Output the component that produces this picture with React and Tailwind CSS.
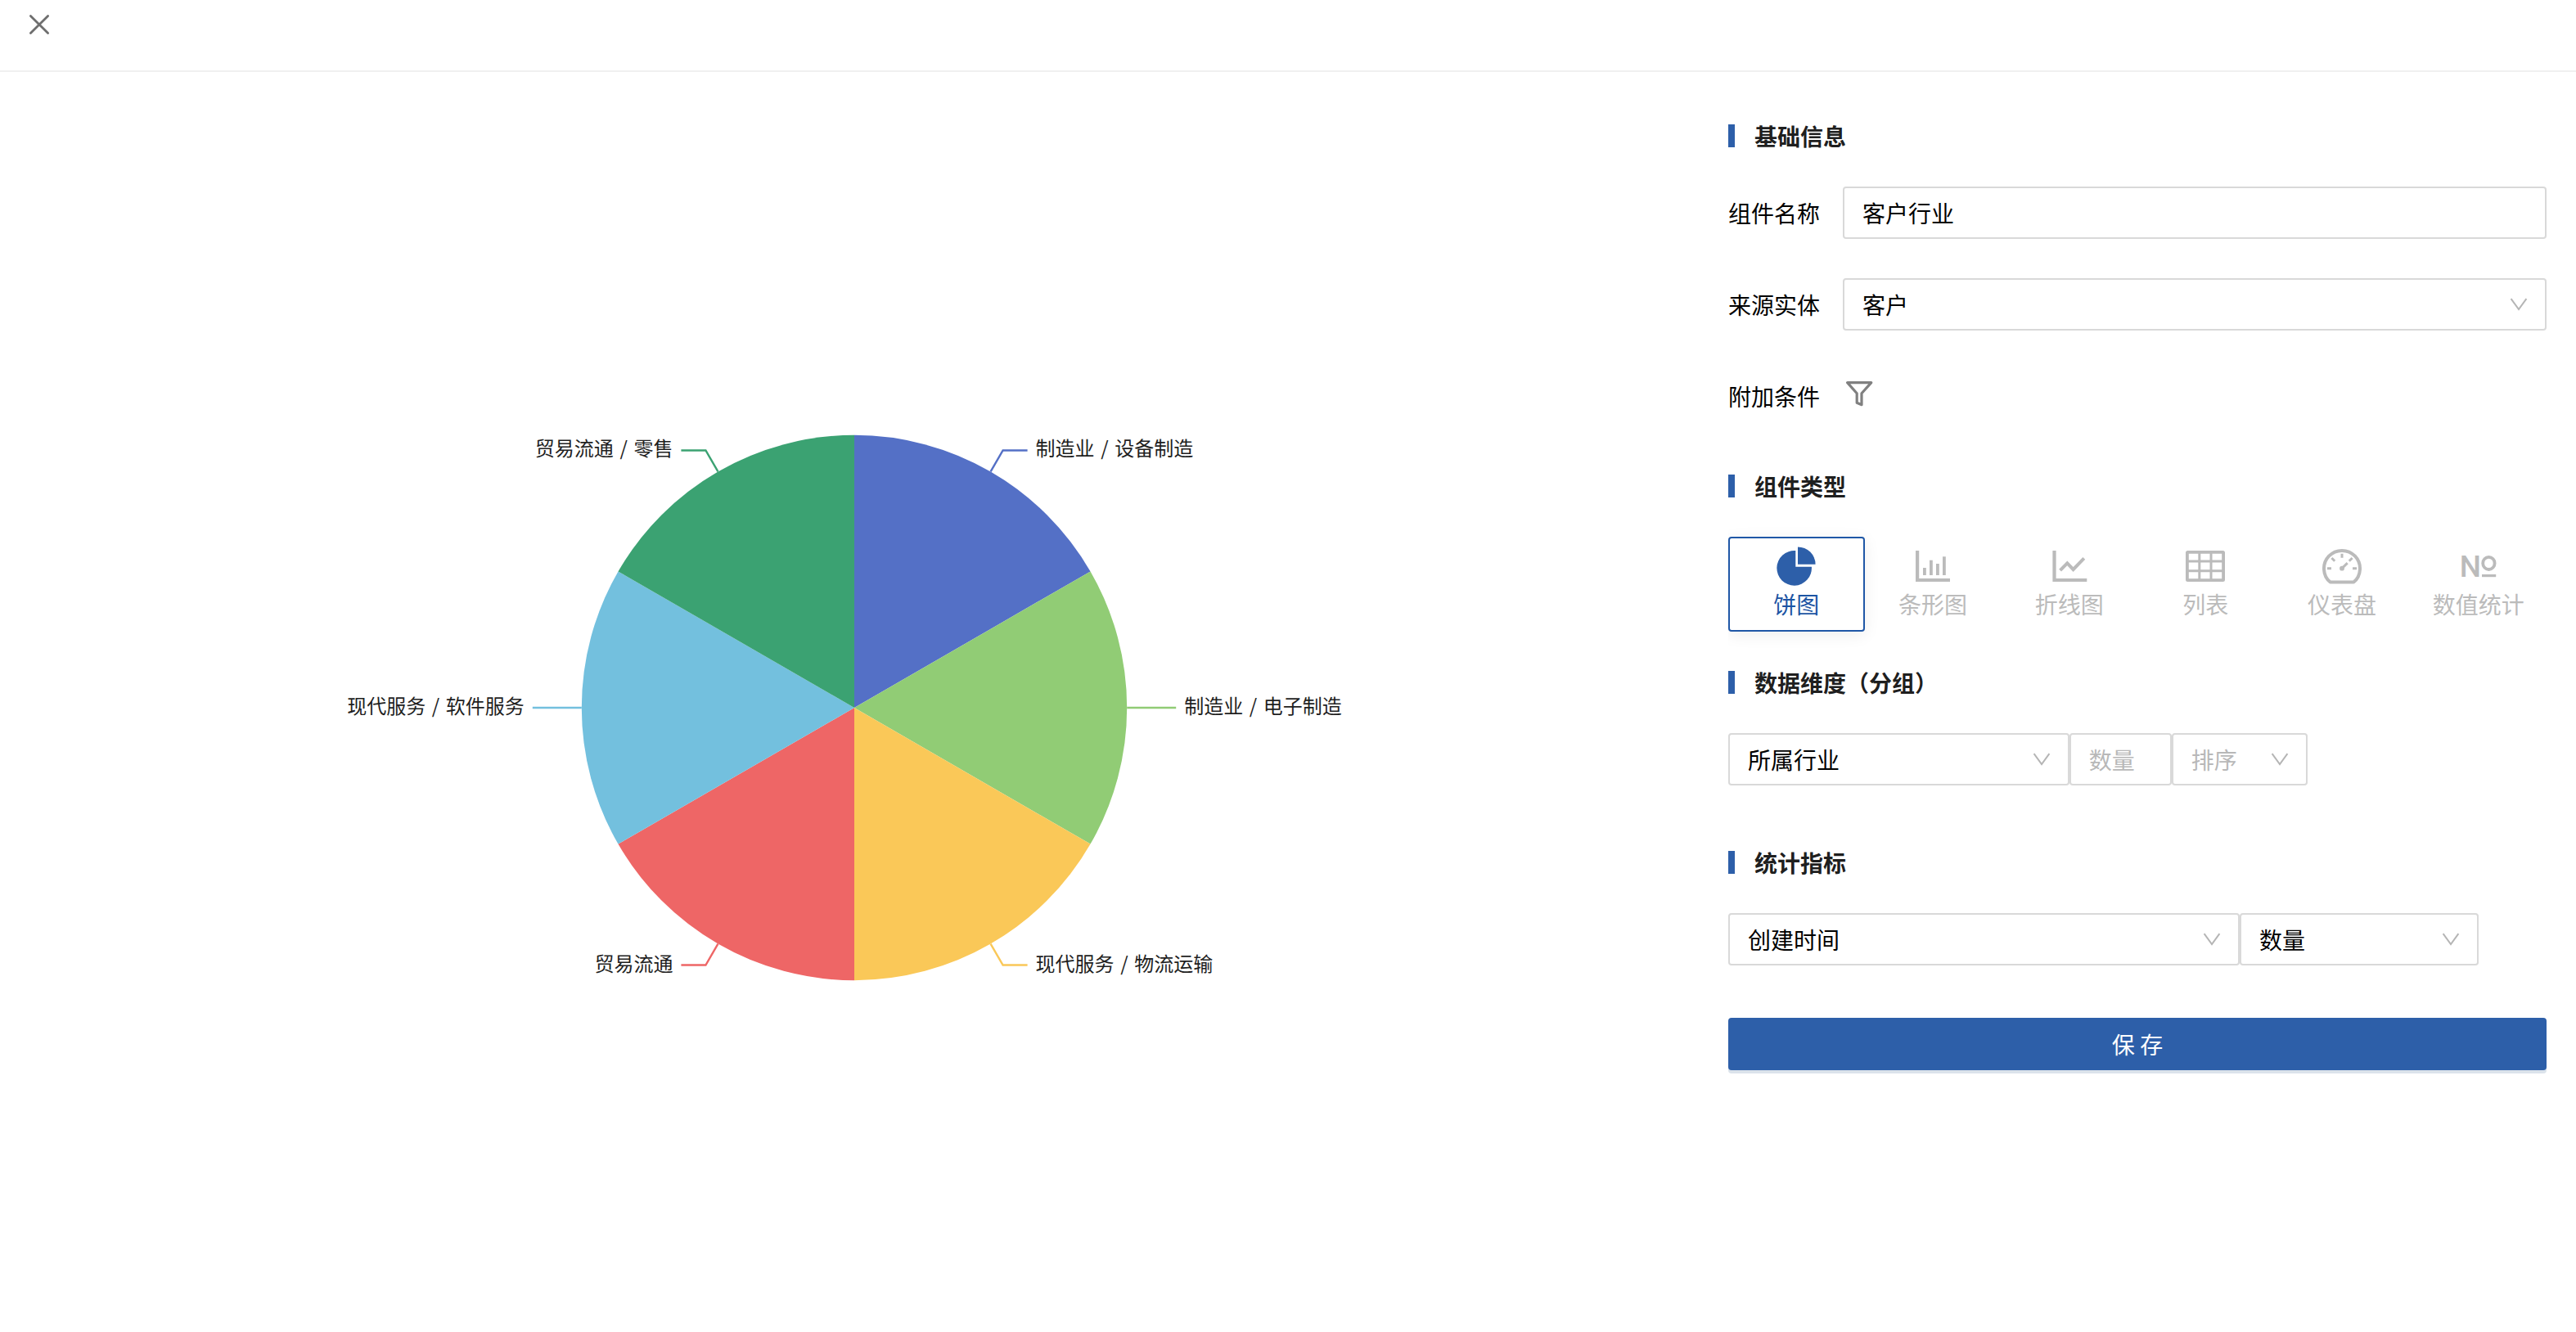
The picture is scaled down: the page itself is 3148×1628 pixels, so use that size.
import React, { useState } from 'react';
import clsx from 'clsx';

const slices = [
  { name: '制造业 / 设备制造', value: 1, color: '#5470c6' },
  { name: '制造业 / 电子制造', value: 1, color: '#91cc75' },
  { name: '现代服务 / 物流运输', value: 1, color: '#fac858' },
  { name: '贸易流通', value: 1, color: '#ee6666' },
  { name: '现代服务 / 软件服务', value: 1, color: '#73c0de' },
  { name: '贸易流通 / 零售', value: 1, color: '#3ba272' },
];

const PieChart = ({ data }) => {
  const cx = 1044;
  const cy = 777;
  const r = 333.2;
  const total = data.reduce((sum, d) => sum + d.value, 0);
  const point = (angle, radius) => [cx + radius * Math.sin(angle), cy - radius * Math.cos(angle)];

  let start = 0;
  const items = data.map((d) => {
    const end = start + (d.value / total) * Math.PI * 2;
    const mid = (start + end) / 2;
    const [x1, y1] = point(start, r);
    const [x2, y2] = point(end, r);
    const [ax, ay] = point(mid, r);
    const [bx, by] = point(mid, r + 30);
    const side = mid < Math.PI ? 1 : -1;
    start = end;
    return {
      ...d,
      side,
      path: `M${cx} ${cy}L${x1} ${y1}A${r} ${r} 0 0 1 ${x2} ${y2}Z`,
      line: `${ax},${ay} ${bx},${by} ${bx + side * 30},${by}`,
      labelX: bx + side * 40,
      labelY: by,
    };
  });

  return (
    <svg className="block h-[1540px] w-[2088px]" viewBox="0 0 2088 1540">
      {items.map((item) => (
        <g key={item.name}>
          <path d={item.path} fill={item.color} />
          <polyline points={item.line} fill="none" stroke={item.color} strokeWidth="2.4" />
          <text
            x={item.labelX}
            y={item.labelY + 7}
            textAnchor={item.side > 0 ? 'start' : 'end'}
            className="fill-[#1f1f1f] text-[24px] [word-spacing:2.2px]"
          >
            {item.name}
          </text>
        </g>
      ))}
    </svg>
  );
};

const PieIcon = () => (
  <svg className="size-12" viewBox="0 0 48 48" fill="currentColor">
    <path d="M23.3 5.1A21.3 21.3 0 1 0 42.9 24.7H23.3Z" />
    <path d="M26 .4A21.6 21.6 0 0 1 47.6 21.7H26Z" />
  </svg>
);

const BarIcon = () => (
  <svg className="size-12" viewBox="0 0 48 48" fill="currentColor">
    <path d="M3 5H7.2V39H45V43H3Z" />
    <rect x="12" y="26" width="3.8" height="9" />
    <rect x="20" y="16.7" width="3.8" height="18.3" />
    <rect x="28" y="21" width="3.8" height="14" />
    <rect x="36" y="12.3" width="3.8" height="22.7" />
  </svg>
);

const LineIcon = () => (
  <svg className="size-12" viewBox="0 0 48 48" fill="currentColor">
    <path d="M3.4 5H7.6V39H45.3V43H3.4Z" />
    <path d="M12.6 29.2L21.3 20.4L28.6 28L41.8 14.4" fill="none" stroke="currentColor" strokeWidth="4" />
  </svg>
);

const TableIcon = () => (
  <svg className="size-12" viewBox="0 0 48 48" fill="none" stroke="currentColor">
    <rect x="1.9" y="6.9" width="44.2" height="34.2" rx="0.6" strokeWidth="3.8" />
    <path d="M16.8 6V42M31 6V42M1 18H47M1 29.7H47" strokeWidth="3" />
  </svg>
);

const GaugeIcon = () => (
  <svg className="size-12" viewBox="0 0 48 48" fill="none" stroke="currentColor">
    <path d="M9.7 43.6A22 22 0 1 1 38.3 43.6Z" strokeWidth="4" strokeLinejoin="round" />
    <path d="M24 8.7V13.7M6 26.7H11M37 26.7H42M11.4 14L15.2 17.8M36.6 14L32.8 17.8" strokeWidth="3" />
    <path d="M24 26.7L30.7 20.2" strokeWidth="3" />
    <circle cx="24" cy="26.7" r="2.9" fill="currentColor" stroke="none" />
  </svg>
);

const NumberIcon = () => (
  <svg className="size-12" viewBox="0 0 48 48" fill="currentColor">
    <text x="0.8" y="37.2" className="font-['Roboto'] text-[37px] font-medium">
      N
    </text>
    <ellipse cx="36.4" cy="20.4" rx="7.2" ry="7.6" fill="none" stroke="currentColor" strokeWidth="3.8" />
    <rect x="28" y="34" width="17.2" height="3.2" />
  </svg>
);

const chartTypes = [
  { key: 'pie', label: '饼图', Icon: PieIcon },
  { key: 'bar', label: '条形图', Icon: BarIcon },
  { key: 'line', label: '折线图', Icon: LineIcon },
  { key: 'table', label: '列表', Icon: TableIcon },
  { key: 'gauge', label: '仪表盘', Icon: GaugeIcon },
  { key: 'number', label: '数值统计', Icon: NumberIcon },
];

const SectionTitle = ({ children }) => (
  <h3 className="flex h-7 items-center gap-6 font-bold">
    <span className="h-7 w-2 bg-[#2d5fa9]" />
    <span className="text-black/90">{children}</span>
  </h3>
);

const Field = ({ label, children }) => (
  <div className="flex h-16 items-center">
    <span className="w-[140px]">{label}</span>
    {children}
  </div>
);

const Select = ({ value, placeholder, className, arrow = true }) => (
  <div
    className={clsx(
      'flex h-16 items-center justify-between rounded border-2 border-[#d9d9d9] bg-white pr-5 pl-[22px]',
      className
    )}
  >
    <span className={value ? '' : 'text-[#b8b8b8]'}>{value || placeholder}</span>
    {arrow && (
      <svg className="size-6 text-[#b5b5b5]" viewBox="0 0 24 24" fill="none" stroke="currentColor">
        <path d="M2.6 5.2L12 18L21.4 5.2" strokeWidth="2" />
      </svg>
    )}
  </div>
);

const App = () => {
  const [type, setType] = useState('pie');

  return (
    <div className="flex h-[1628px] w-[3148px] flex-col overflow-hidden bg-white font-['Noto_Sans_CJK_SC',sans-serif] text-[28px] leading-none text-black">
      <header className="h-[88px] shrink-0 border-b-2 border-[#f0f0f0] pt-[10px] pl-7">
        <button className="block">
          <svg className="size-10 text-[#6e6e6e]" viewBox="0 0 40 40" fill="none" stroke="currentColor">
            <path d="M9.4 9.4L30.6 30.6M30.6 9.4L9.4 30.6" strokeWidth="2.8" strokeLinecap="round" />
          </svg>
        </button>
      </header>

      <div className="flex grow">
        <div className="w-[2088px]">
          <PieChart data={slices} />
        </div>

        <div className="ml-6 w-[1000px] pt-16">
          <SectionTitle>基础信息</SectionTitle>
          <div className="mt-12 flex flex-col gap-12">
            <Field label="组件名称">
              <input
                defaultValue="客户行业"
                className="h-16 grow rounded border-2 border-[#d9d9d9] px-[22px]"
              />
            </Field>
            <Field label="来源实体">
              <Select value="客户" className="grow" />
            </Field>
            <Field label="附加条件">
              <svg className="mb-1 size-10 text-[#808080]" viewBox="0 0 40 40" fill="none" stroke="currentColor">
                <path
                  d="M5.6 5.6H34.8L23 18.8V32.7L17.2 30.3V18.8Z"
                  strokeWidth="3.2"
                  strokeLinejoin="round"
                />
              </svg>
            </Field>
          </div>

          <div className="mt-16">
            <SectionTitle>组件类型</SectionTitle>
          </div>
          <div className="mt-12 grid grid-cols-6">
            {chartTypes.map(({ key, label, Icon }) => (
              <button
                key={key}
                onClick={() => setType(key)}
                className={clsx(
                  'flex h-[116px] flex-col items-center rounded border-2 pt-[10px]',
                  type === key
                    ? 'border-[#1f57a6] bg-white text-[#2d5fa9] shadow-[0_4px_20px_rgba(0,0,0,0.07)] [clip-path:inset(-40px_-40px_-40px_0)]'
                    : 'border-transparent text-[#bbbbbb]'
                )}
              >
                <Icon />
                <span className={clsx('mt-2', type === key && 'text-[#1c54a3]')}>{label}</span>
              </button>
            ))}
          </div>

          <div className="mt-12">
            <SectionTitle>数据维度（分组）</SectionTitle>
          </div>
          <div className="mt-12 flex">
            <Select value="所属行业" className="w-[416.67px]" />
            <Select placeholder="数量" className="w-[125px]" arrow={false} />
            <Select placeholder="排序" className="w-[166.67px]" />
          </div>

          <div className="mt-20">
            <SectionTitle>统计指标</SectionTitle>
          </div>
          <div className="mt-12 flex">
            <Select value="创建时间" className="w-[625px]" />
            <Select value="数量" className="w-[291.67px]" />
          </div>

          <button className="mt-16 h-16 w-full rounded bg-[#2d5fa9] text-white shadow-[0_4px_0_#dbe3eb]">
            保 存
          </button>
        </div>
      </div>
    </div>
  );
};

export default App;
